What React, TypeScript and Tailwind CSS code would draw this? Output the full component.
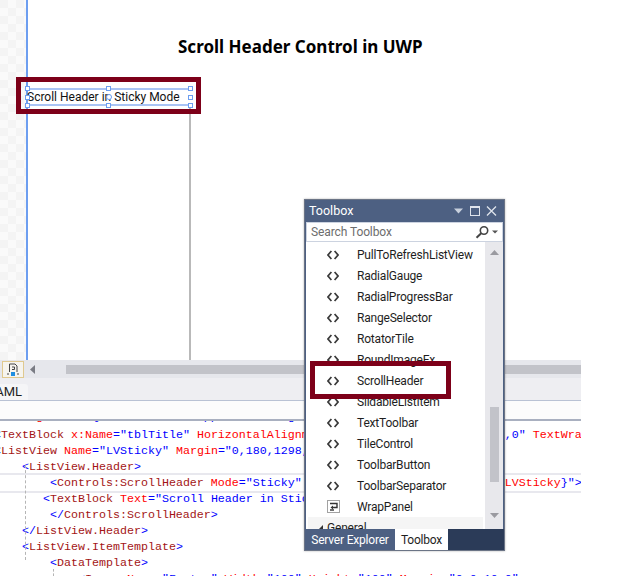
const UI = 'font-["Roboto","Noto_Sans",sans-serif]';

type Token = [string, string];

const TAG = 'text-[#a31515]';
const BLUE = 'text-[#0000ff]';
const ATTR = 'text-[#ff0000]';

const codeLines: Token[][] = [
  [['  Background', ATTR], ['="{ThemeResource ApplicationPageBackgroundThemeBrush}">', BLUE]],
  [['<', BLUE], ['TextBlock', TAG], [' x:Name', ATTR], ['="tblTitle"', BLUE], [' HorizontalAlignment', ATTR], ['="Center"', BLUE], [' Margin', ATTR], ['="0,100,0,0"', BLUE], [' TextWrapping', ATTR]],
  [['<', BLUE], ['ListView', TAG], [' Name', ATTR], ['="LVSticky"', BLUE], [' Margin', ATTR], ['="0,180,1298,0"', BLUE]],
  [['    <', BLUE], ['ListView.Header', TAG], ['>', BLUE]],
  [['        <', BLUE], ['Controls:ScrollHeader', TAG], [' Mode', ATTR], ['="Sticky"', BLUE], [' TargetListViewBase', ATTR], ['="{', BLUE], ['x:Bind ', TAG], ['LVSticky', ATTR], ['}">', BLUE]],
  [['       <', BLUE], ['TextBlock', TAG], [' Text', ATTR], ['="Scroll Header in Sticky Mode"', BLUE], ['/>', BLUE]],
  [['        </', BLUE], ['Controls:ScrollHeader', TAG], ['>', BLUE]],
  [['    </', BLUE], ['ListView.Header', TAG], ['>', BLUE]],
  [['    <', BLUE], ['ListView.ItemTemplate', TAG], ['>', BLUE]],
  [['        <', BLUE], ['DataTemplate', TAG], ['>', BLUE]],
  [['            <', BLUE], ['Image', TAG], [' Name', ATTR], ['="Footer"', BLUE], [' Width', ATTR], ['="100"', BLUE], [' Height', ATTR], ['="100"', BLUE], [' Margin', ATTR], ['="0,0,10,0"', BLUE]],
];

const toolboxItems = [
  'PullToRefreshListView',
  'RadialGauge',
  'RadialProgressBar',
  'RangeSelector',
  'RotatorTile',
  'RoundImageEx',
  'ScrollHeader',
  'SlidableListItem',
  'TextToolbar',
  'TileControl',
  'ToolbarButton',
  'ToolbarSeparator',
];

function Handle({ className }: { className: string }) {
  return <div className={`absolute w-[5px] h-[5px] bg-white border border-[#6d9ef0] ${className}`} />;
}

function CodeIcon() {
  return (
    <svg width="12" height="10" viewBox="0 0 12 10" fill="none" stroke="#3a3a3a" strokeWidth="1.7">
      <path d="M4.4 1 L1 5 L4.4 9" />
      <path d="M7.6 1 L11 5 L7.6 9" />
    </svg>
  );
}

function WrapIcon() {
  return (
    <svg width="13" height="13" viewBox="0 0 13 13" fill="none">
      <rect x="0.5" y="0.5" width="12" height="12" stroke="#444" strokeDasharray="1 1" />
      <path d="M3 3.5 H10 V7.5 H5" stroke="#333" strokeWidth="1.4" />
      <path d="M3 10 H7" stroke="#333" strokeWidth="1.4" />
      <path d="M6 5.5 L3.5 7.5 L6 9.5 Z" fill="#333" />
    </svg>
  );
}

function Toolbox() {
  return (
    <div className={`absolute left-[304px] top-[199px] w-[201px] h-[352px] flex flex-col bg-[#4d6082] border border-[#6b7486] shadow-[0_0_2px_rgba(0,0,0,0.3)] ${UI}`}>
      <div className="h-[22px] shrink-0 flex items-center pl-[4px] pr-[4px] text-[12.5px] text-white">
        <span className="flex-1">Toolbox</span>
        <svg width="47" height="12" viewBox="0 0 47 12" fill="none">
          <path d="M1 3.5 H10 L5.5 8.5 Z" fill="#c8d0dd" />
          <rect x="17.5" y="1.5" width="9" height="9" stroke="#dfe4ec" strokeWidth="1" />
          <path d="M17.5 2 H26.5" stroke="#dfe4ec" strokeWidth="2" />
          <path d="M34 1.5 L43 10.5 M43 1.5 L34 10.5" stroke="#dfe4ec" strokeWidth="1.3" />
        </svg>
      </div>
      <div className="mx-[1px] h-[20px] shrink-0 bg-white border border-[#ccd3e0] flex items-center pl-[4px] pr-[3px] text-[12px] tracking-[-0.1px] text-[#6d6d6d]">
        <span className="flex-1">Search Toolbox</span>
        <svg width="24" height="14" viewBox="0 0 24 14" fill="none">
          <circle cx="9" cy="5.5" r="3.7" stroke="#444" strokeWidth="1.6" />
          <path d="M6.2 8.3 L1.5 12.8" stroke="#444" strokeWidth="2" />
          <path d="M17 5.5 H23 L20 8.5 Z" fill="#555" />
        </svg>
      </div>
      <div className="flex-1 min-h-0 flex bg-white mx-[1px] overflow-hidden">
        <div className="flex-1 min-w-0 flex flex-col pt-[2px] text-[12px] tracking-[-0.2px] text-[#1e1e1e]">
          {toolboxItems.map((item) => (
            <div key={item} className="h-[21px] shrink-0 flex items-center">
              <div className="w-[21px]" />
              <CodeIcon />
              <span className="ml-[18px]">{item}</span>
            </div>
          ))}
          <div className="h-[21px] shrink-0 flex items-center">
            <div className="w-[21px]" />
            <WrapIcon />
            <span className="ml-[17px]">WrapPanel</span>
          </div>
          <div className="h-[21px] shrink-0 flex items-center bg-[#f5f5f5] ml-[2px] mr-[2px]">
            <svg className="ml-[9px]" width="6" height="6" viewBox="0 0 6 6">
              <path d="M6 0 V6 H0 Z" fill="#333" />
            </svg>
            <span className="ml-[4px]">General</span>
          </div>
        </div>
        <div className="w-[18px] shrink-0 bg-[#e8e8ec] flex flex-col items-center">
          <svg className="mt-[8px]" width="9" height="5" viewBox="0 0 9 5">
            <path d="M0 5 L4.5 0 L9 5 Z" fill="#9a9aa0" />
          </svg>
          <div className="mt-[152px] w-[9px] h-[75px] bg-[#c2c3c9]" />
          <svg className="mt-[31px]" width="9" height="5" viewBox="0 0 9 5">
            <path d="M0 0 L9 0 L4.5 5 Z" fill="#9a9aa0" />
          </svg>
        </div>
      </div>
      <div className="h-[21px] shrink-0 flex bg-[#2b3b58] text-[12px] tracking-[-0.2px]">
        <div className="w-[90px] flex items-center justify-center bg-[#4d6082] text-white">Server Explorer</div>
        <div className="w-[53px] flex items-center justify-center bg-white text-[#1e1e1e]">Toolbox</div>
      </div>
    </div>
  );
}

export default function App() {
  return (
    <div className="relative w-[619px] h-[576px] overflow-hidden bg-white">
      <div className="w-[581px] h-full flex flex-col">
        {/* designer surface */}
        <div className="h-[360px] shrink-0 flex">
          <div className="w-[26px] shrink-0 bg-[#f4f4f4] bg-[linear-gradient(45deg,#fafafa_25%,transparent_25%,transparent_75%,#fafafa_75%),linear-gradient(45deg,#fafafa_25%,transparent_25%,transparent_75%,#fafafa_75%)] bg-[length:16px_16px] bg-[position:0_0,8px_8px]" />
          <div className="w-[2px] shrink-0 bg-[#6d9ef0]" />
          <div className="flex-1 flex flex-col">
            <div className="pl-[150px] pt-[35px] h-[88px] shrink-0 text-[17px] leading-[23px] font-bold text-black font-['Noto_Sans',sans-serif]">
              Scroll Header Control in UWP
            </div>
            <div className={`relative w-[163px] h-[18px] shrink-0 border-y-2 border-[#a9c4f5] flex items-center text-[12px] text-[#111] whitespace-nowrap ${UI}`}>
              <span className="-ml-[1px]">Scroll Header in Sticky Mode</span>
              <Handle className="-left-[3px] -top-[4px]" />
              <Handle className="-left-[3px] top-[5px]" />
              <Handle className="-left-[3px] bottom-[-4px]" />
              <Handle className="left-[78px] -top-[4px]" />
              <Handle className="left-[78px] bottom-[-4px]" />
              <Handle className="right-[-2px] -top-[4px]" />
              <Handle className="right-[-2px] top-[5px]" />
              <Handle className="right-[-2px] bottom-[-4px]" />
              <div className="absolute left-[78px] top-[4px] w-[6px] h-[6px] rounded-full bg-white border border-[#6d9ef0]" />
            </div>
            <div className="flex-1 w-[163px] border-r-2 border-[#b9b9b9]" />
          </div>
        </div>

        {/* designer toolbar */}
        <div className="h-[18px] shrink-0 bg-[#e6e7ec] flex items-center">
          <div className="ml-[2px] w-[22px] h-[17px] self-end bg-[#f6f4ee] border border-[#e0c98f] flex items-center justify-center">
            <svg width="12" height="14" viewBox="0 0 12 14" fill="none">
              <path d="M2.5 9 V1 H8 L10 3 V9" stroke="#444" />
              <path d="M5 4 H7.5 V6.5 H5" stroke="#444" />
              <rect x="4" y="9" width="4" height="4" fill="#1f8ee0" />
              <path d="M1 10 V12 M11 10 V12" stroke="#444" />
            </svg>
          </div>
          <svg className="ml-[6px]" width="5" height="9" viewBox="0 0 5 9">
            <path d="M5 0 V9 L0 4.5 Z" fill="#7a7c84" />
          </svg>
          <div className="ml-[31px] flex-1 h-[9px] bg-[#c2c3c9]" />
        </div>

        {/* xaml tab */}
        <div className="h-[22px] shrink-0 bg-[#eeeef2] flex items-end">
          <div className={`w-[28px] h-[16px] rounded-tr-[3px] bg-[#f5f5f7] overflow-hidden flex justify-end items-center text-[13px] text-[#1e1e1e] ${UI}`}>
            <span className="pr-[6px]">AML</span>
          </div>
        </div>
        <div className="h-[21px] shrink-0 bg-[#fcfcfc] border-t border-[#b9c2d4] border-b-2 border-b-[#a9b0c0]" />

        {/* code editor */}
        <div className="relative flex-1 min-h-0 overflow-hidden">
          <div className="-mt-[12px] -ml-[6px] font-['Liberation_Mono',monospace] text-[11.66px] leading-[16px] whitespace-pre">
            {codeLines.map((line, i) => (
              <div
                key={i}
                className={
                  i === 0
                    ? 'h-[18px]'
                    : i === 4
                      ? 'h-[16px] bg-white shadow-[0_-2px_0_#e8e8ee,0_2px_0_#e8e8ee] relative'
                      : 'h-[16px]'
                }
              >
                {line.map(([text, color], j) => (
                  <span key={j} className={color}>{text}</span>
                ))}
              </div>
            ))}
          </div>
          <div className="absolute left-[25px] top-[44px] bottom-[16px] border-l border-dashed border-[#b5b5b5]" />
          <div className="absolute left-[53px] top-[148px] bottom-0 border-l border-dashed border-[#b5b5b5]" />
        </div>
      </div>

      <Toolbox />

      {/* red callouts */}
      <div className="absolute left-[16px] top-[77px] w-[185px] h-[37px] border-[5px] border-[#7d0019]" />
      <div className="absolute left-[310px] top-[361px] w-[141px] h-[38px] border-[5px] border-[#7d0019]" />
    </div>
  );
}
